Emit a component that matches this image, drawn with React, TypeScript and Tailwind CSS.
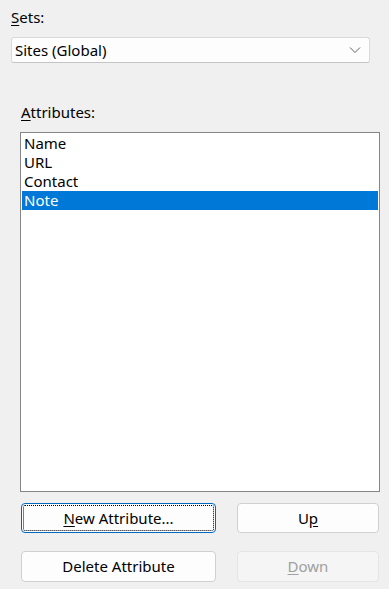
import React from "react"

const items = ["Name", "URL", "Contact", "Note"]

function Chevron() {
  return (
    <svg width="12" height="8" viewBox="0 0 12 8" className="text-[#606060]">
      <path d="M1 1.5 L6 6.5 L11 1.5" fill="none" stroke="currentColor" strokeWidth="1" />
    </svg>
  )
}

export default function App() {
  return (
    <div
      className="w-[389px] h-[589px] bg-[#f0f0f0] text-[15px] leading-[19px] text-black flex flex-col"
      style={{ fontFamily: "'Noto Sans', 'Open Sans', sans-serif" }}
    >
      {/* Sets */}
      <div className="pl-[11px] pt-[8px]">
        <span className="underline underline-offset-2">S</span>ets:
      </div>
      <div className="mt-[10px] ml-[11px] w-[359px] h-[26px] bg-[#fdfdfd] border border-[#d9d9d9] border-b-[#c4c4c4] rounded-[3px] flex items-center justify-between pl-[3px] pr-[8px]">
        <span>Sites (Global)</span>
        <Chevron />
      </div>

      {/* Attributes */}
      <div className="mt-[40px] pl-[21px]">
        <span className="underline underline-offset-2">A</span>ttributes:
      </div>
      <div className="mt-[10px] ml-[20px] w-[360px] h-[360px] bg-white border border-[#868686] p-px">
        {items.map((it) => (
          <div
            key={it}
            className={
              it === "Note"
                ? "h-[19px] pl-[2px] bg-[#0078d7] text-white"
                : "h-[19px] pl-[2px]"
            }
          >
            {it}
          </div>
        ))}
      </div>

      {/* Buttons */}
      <div className="mt-[11px] ml-[21px] flex gap-[21px]">
        <button className="w-[195px] h-[30px] bg-[#fdfdfd] border border-[#0067c0] rounded-[4px] outline-1 outline-dotted outline-black outline-offset-[-3px]">
          <span className="underline underline-offset-2">N</span>ew Attribute...
        </button>
        <button className="w-[142px] h-[30px] bg-[#fdfdfd] border border-[#d0d0d0] rounded-[4px]">
          U<span className="underline underline-offset-2">p</span>
        </button>
      </div>
      <div className="mt-[18px] ml-[21px] flex gap-[21px]">
        <button className="w-[195px] h-[31px] bg-[#fdfdfd] border border-[#d0d0d0] rounded-[4px]">
          Delete Attribute
        </button>
        <button className="w-[142px] h-[31px] bg-[#f5f5f5] border border-[#e5e5e5] rounded-[4px] text-[#a0a0a0]">
          <span className="underline underline-offset-2">D</span>own
        </button>
      </div>
    </div>
  )
}
